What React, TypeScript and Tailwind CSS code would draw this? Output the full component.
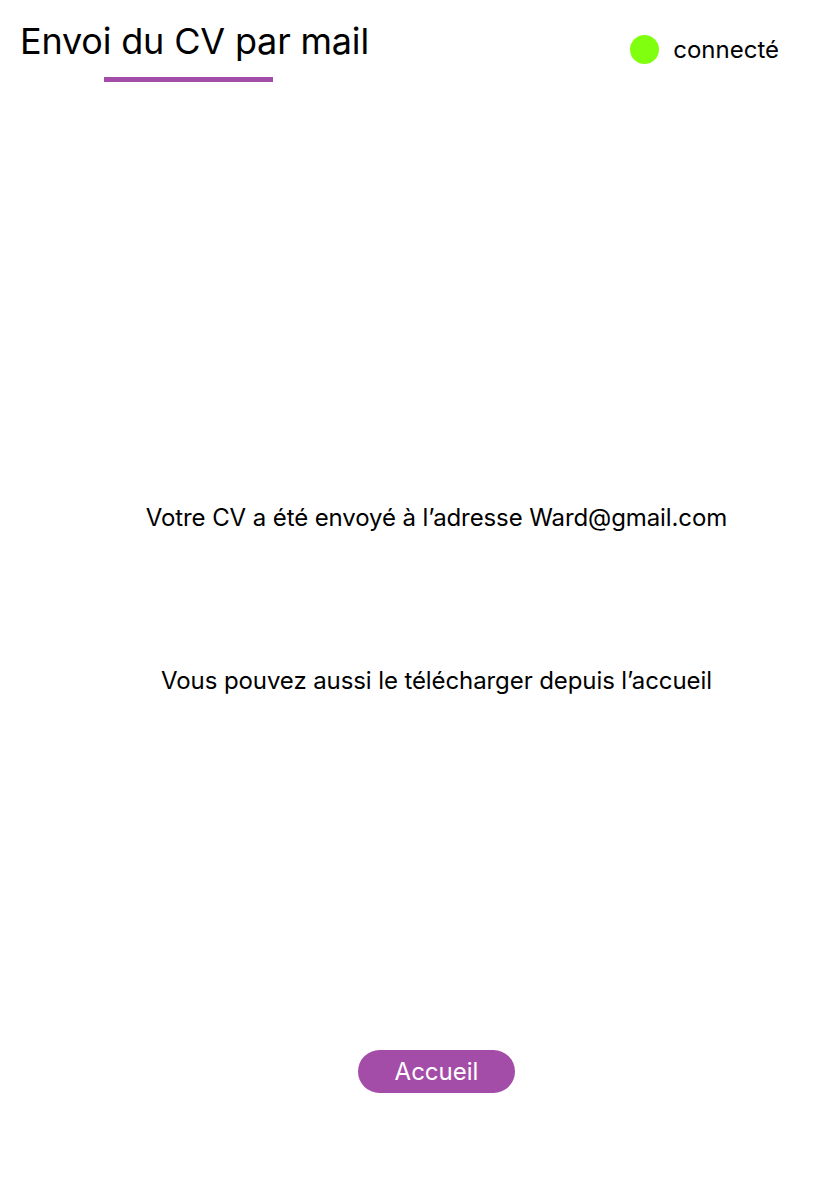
export default function App() {
  return (
    <div
      className="w-[834px] h-[1194px] bg-white text-black flex flex-col"
      style={{ fontFamily: 'Inter, "Noto Sans", sans-serif' }}
    >
      {/* ── Header ───────────────────────────────────────────── */}
      <header className="flex items-start justify-between pl-[20px] pr-[55px] pt-[20px]">
        <div className="flex flex-col">
          <h1 className="text-[36px] leading-[42px] font-normal tracking-[-0.005em]">
            Envoi du CV par mail
          </h1>
          <div className="ml-[84px] mt-[15px] h-[5px] w-[169px] bg-[#A34DA8]" />
        </div>
        <div className="flex items-center gap-[14px] pt-[15px]">
          <span className="h-[29px] w-[29px] rounded-full bg-[#80FF0F]" />
          <span className="text-[24px] leading-[28px]">connecté</span>
        </div>
      </header>

      {/* ── Message ──────────────────────────────────────────── */}
      <main className="flex flex-col items-center pl-[39px] text-[24px] leading-[28px] tracking-[-0.004em]">
        <p className="mt-[422px]">Votre CV a été envoyé à l’adresse Ward@gmail.com</p>
        <p className="mt-[135px]">Vous pouvez aussi le télécharger depuis l’accueil</p>
        <button className="mt-[355px] h-[43px] w-[157px] rounded-full bg-[#A34DA8] text-white text-[24px] leading-[28px] tracking-normal">
          Accueil
        </button>
      </main>
    </div>
  )
}
